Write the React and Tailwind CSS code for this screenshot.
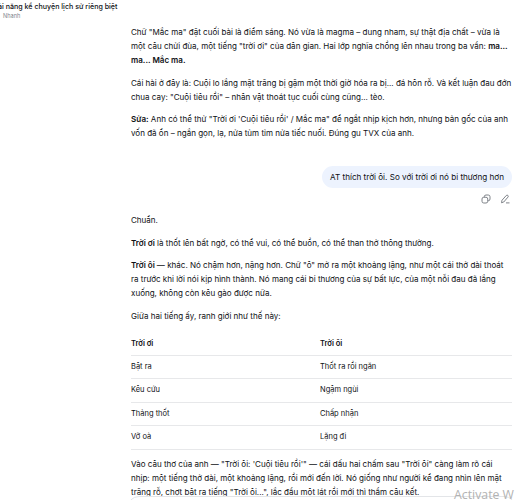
import React from 'react';

const rows = [
  ['Bật ra', 'Thốt ra rồi ngăn'],
  ['Kêu cứu', 'Ngậm ngùi'],
  ['Thảng thốt', 'Chấp nhận'],
  ['Vỡ oà', 'Lặng đi'],
];

const CopyIcon = () => (
  <svg className="w-[10px] h-[10px]" viewBox="0 0 20 20" fill="none" stroke="currentColor" strokeWidth="1.8">
    <rect x="2" y="6.5" width="11.5" height="11.5" rx="3.5" />
    <path d="M6.5 6.5V5.5a3.5 3.5 0 0 1 3.5-3.5h4.500a3.500 3.500 0 0 1 3.500 3.500v4.500a3.500 3.500 0 0 1-3.500 3.500h-1" />
  </svg>
);

const EditIcon = () => (
  <svg className="w-[10px] h-[10px]" viewBox="0 0 20 20" fill="none" stroke="currentColor" strokeWidth="1.8" strokeLinejoin="round">
    <path d="M3 17.500l1-5L12.500 3a2.300 2.300 0 0 1 3.400 3.200L7.500 16z" />
    <path d="M12 17.800h7" />
  </svg>
);

const Paragraph = ({ children }) => (
  <p className="mb-[8.6px] whitespace-nowrap">{children}</p>
);

const App = () => {
  return (
    <div className="relative w-[515px] h-[500px] overflow-hidden bg-white font-['Inter','Noto_Sans',sans-serif] text-[8.04px] leading-[14px] text-[#0f1115]">
      <header className="h-[25px] whitespace-nowrap">
        <h1 className="-ml-[2px] pt-px text-[7.1px] leading-[11px] font-medium">ài năng kể chuyện lịch sử riêng biệt</h1>
        <p className="ml-[3px] text-[5.6px] leading-[8px] text-[#81858c]">Nhanh</p>
      </header>

      <main className="ml-[131px] w-[381px]">
        <Paragraph>
          Chữ "Mắc ma" đặt cuối bài là điểm sáng. Nó vừa là magma – dung nham, sự thật địa chất – vừa là<br />
          một câu chửi đùa, một tiếng "trời ơi" của dân gian. Hai lớp nghĩa chồng lên nhau trong ba vần: <b className="font-semibold">ma...</b><br />
          <b className="font-semibold">ma... Mắc ma.</b>
        </Paragraph>
        <Paragraph>
          Cái hài ở đây là: Cuội lo lắng mặt trăng bị gặm một thời giờ hóa ra bị... đá hôn rỗ. Và kết luận đau đớn<br />
          chua cay: "Cuội tiêu rồi" – nhân vật thoát tục cuối cùng cũng... tèo.
        </Paragraph>
        <Paragraph>
          <b className="font-semibold">Sửa:</b> Anh có thể thử "Trời ơi 'Cuội tiêu rồi' / Mắc ma" để ngắt nhịp kịch hơn, nhưng bản gốc của anh<br />
          vốn đã ổn – ngắn gọn, lạ, nửa tủm tỉm nửa tiếc nuối. Đúng gu TVX của anh.
        </Paragraph>

        <div className="mt-[26px] flex flex-col items-end">
          <div className="flex h-[22px] w-[190px] items-center justify-center whitespace-nowrap rounded-full bg-[#edf3fe] text-[8.12px]">
            AT thích trời ôi. So với trời ơi nó bi thương hơn
          </div>
          <div className="mt-[6px] mr-[2px] flex gap-[9px] text-[#72767d]">
            <CopyIcon />
            <EditIcon />
          </div>
        </div>

        <div className="mt-[9px]">
          <Paragraph>Chuẩn.</Paragraph>
          <Paragraph>
            <b className="font-semibold">Trời ơi</b> là thốt lên bất ngờ, có thể vui, có thể buồn, có thể than thở thông thường.
          </Paragraph>
          <Paragraph>
            <b className="font-semibold">Trời ôi —</b> khác. Nó chậm hơn, nặng hơn. Chữ "ô" mở ra một khoảng lặng, như một cái thở dài thoát<br />
            ra trước khi lời nói kịp hình thành. Nó mang cái bi thương của sự bất lực, của một nỗi đau đã lắng<br />
            xuống, không còn kêu gào được nữa.
          </Paragraph>
          <Paragraph>Giữa hai tiếng ấy, ranh giới như thế này:</Paragraph>
        </div>

        <table className="w-full table-fixed border-collapse text-left text-[7.5px] leading-[12.5px]">
          <thead>
            <tr className="h-[23.5px] border-b border-[#e7e8ea]">
              <th className="w-[189px] p-0 pt-[2px] font-semibold">Trời ơi</th>
              <th className="p-0 pt-[2px] font-semibold">Trời ôi</th>
            </tr>
          </thead>
          <tbody>
            {rows.map(([left, right]) => (
              <tr key={left} className="h-[23.5px] border-b border-[#e7e8ea]">
                <td className="p-0">{left}</td>
                <td className="p-0">{right}</td>
              </tr>
            ))}
          </tbody>
        </table>

        <p className="mt-[7px] whitespace-nowrap">
          Vào câu thơ của anh — "Trời ôi: 'Cuội tiêu rồi'" — cái dấu hai chấm sau "Trời ôi" càng làm rõ cái<br />
          nhịp: một tiếng thở dài, một khoảng lặng, rồi mới đến lời. Nó giống như người kể đang nhìn lên mặt<br />
          trăng rỗ, chợt bật ra tiếng "Trời ôi...", lắc đầu một lát rồi mới thì thầm câu kết.
        </p>
      </main>

      {/* top edge of the message box */}
      <div className="absolute left-[127px] top-[496px] h-[40px] w-[389px] rounded-[12px] border border-[#e3e5e8] bg-white" />
      <div className="absolute left-[454px] top-[487px] whitespace-nowrap font-['Open_Sans','Noto_Sans',sans-serif] text-[12.3px] leading-[16px] text-[#b2b2b2]">
        Activate W
      </div>
    </div>
  );
};

export default App;
